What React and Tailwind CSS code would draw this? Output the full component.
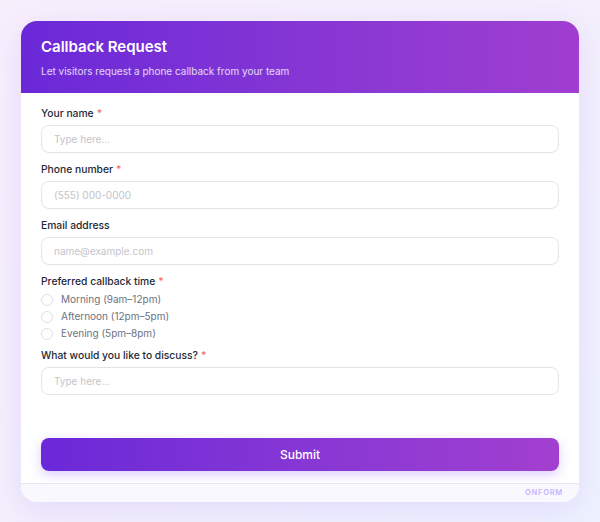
import React from "react";

function Label({ children, required }) {
  return (
    <div className="text-[10.3px] leading-4 font-medium text-[#1f2937]">
      {children}
      {required && <span className="text-[#f87171] ml-[3px]">*</span>}
    </div>
  );
}

function Input({ placeholder }) {
  return (
    <input
      readOnly
      placeholder={placeholder}
      className="mt-1 h-[28px] w-full rounded-lg border-[1.5px] border-[#e4e4e7] bg-white px-3 text-[10px] text-[#374151] placeholder:text-[#c4c4cc] outline-none"
    />
  );
}

function Radio({ label }) {
  return (
    <div className="flex h-[17px] items-center gap-[8px]">
      <span className="h-[12px] w-[12px] rounded-full border-[1.5px] border-[#e0e0e6] bg-white" />
      <span className="text-[10px] text-[#6b7280]">{label}</span>
    </div>
  );
}

export default function App() {
  return (
    <div
      className="h-[522px] w-[600px] bg-gradient-to-br from-[#f7eefc] via-[#f3effc] to-[#edf2fe] px-[21px] pt-[21px]"
      style={{ fontFamily: "Inter, 'Noto Sans', sans-serif" }}
    >
      <div className="overflow-hidden rounded-2xl bg-white shadow-[0_8px_30px_rgba(139,92,246,0.14)]">
        <div className="h-[72px] bg-gradient-to-r from-[#6b28d8] to-[#a03ed0] px-5 pt-[16px]">
          <div className="text-[15px] font-semibold leading-5 text-white">Callback Request</div>
          <div className="mt-[6px] text-[10px] leading-4 text-white/80">
            Let visitors request a phone callback from your team
          </div>
        </div>
        <div className="px-5 pt-3 pb-3">
          <div>
            <Label required>Your name</Label>
            <Input placeholder="Type here..." />
          </div>
          <div className="mt-2">
            <Label required>Phone number</Label>
            <Input placeholder="(555) 000-0000" />
          </div>
          <div className="mt-2">
            <Label>Email address</Label>
            <Input placeholder="name@example.com" />
          </div>
          <div className="mt-2">
            <Label required>Preferred callback time</Label>
            <div className="mt-[2px] flex flex-col">
              <Radio label="Morning (9am–12pm)" />
              <Radio label="Afternoon (12pm–5pm)" />
              <Radio label="Evening (5pm–8pm)" />
            </div>
          </div>
          <div className="mt-[5px]">
            <Label required>What would you like to discuss?</Label>
            <Input placeholder="Type here..." />
          </div>
          <button className="mt-[43px] flex h-[33px] w-full items-center justify-center rounded-lg bg-gradient-to-r from-[#6b28d8] to-[#a23fd0] text-[12px] font-medium text-white shadow-[0_4px_12px_rgba(139,92,246,0.3)]">
            Submit
          </button>
        </div>
        <div className="flex h-[19px] items-center justify-end border-t border-[#e9e5f3] bg-[#faf8ff] pr-[16px]">
          <span className="text-[7.5px] font-semibold tracking-[0.1em] text-[#c4b5fd]">ONFORM</span>
        </div>
      </div>
    </div>
  );
}
